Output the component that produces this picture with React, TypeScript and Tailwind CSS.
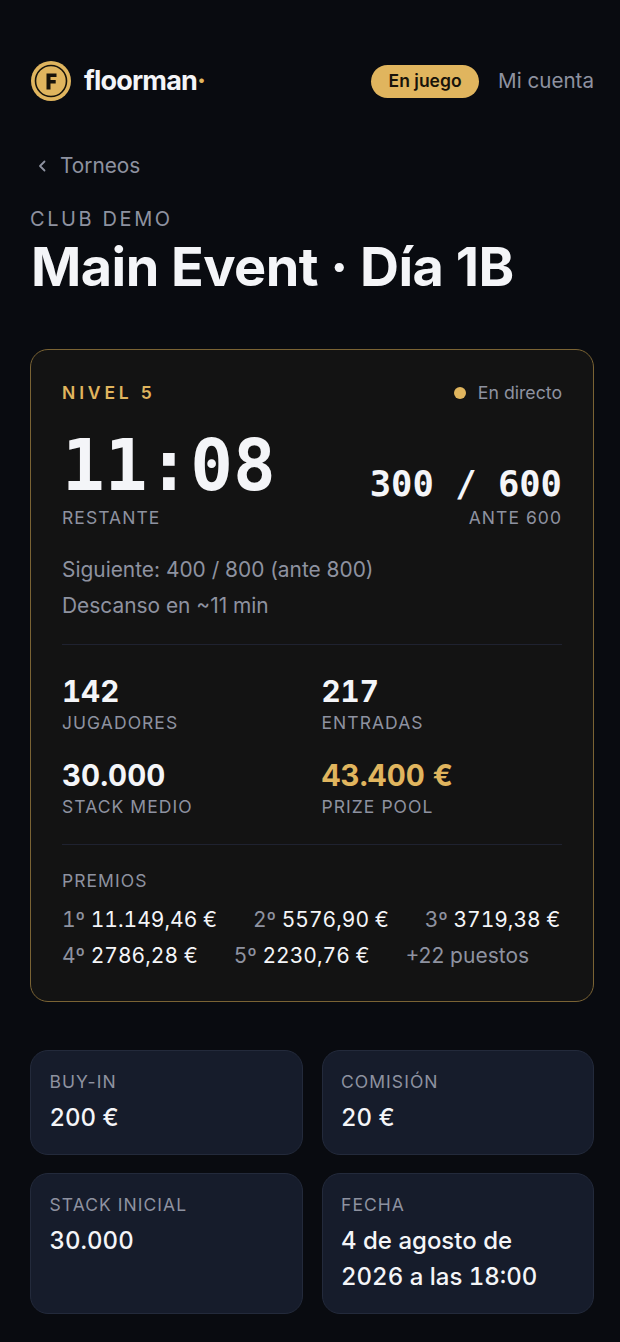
const sans = "font-['Inter','Noto_Sans',sans-serif]"

function Logo() {
  return (
    <svg width="40" height="40" viewBox="0 0 40 40" className="shrink-0">
      <circle cx="20" cy="20" r="20" fill="#e0b55e" />
      <circle cx="20" cy="20" r="15.5" fill="none" stroke="#17130a" strokeWidth="1.6" />
      <path d="M15.5 12.5h10v3.6h-6v3h5.2v3.5h-5.2v5.9h-4z" fill="#17130a" />
    </svg>
  )
}

function Stat({ value, label, gold }: { value: string; label: string; gold?: boolean }) {
  return (
    <div>
      <div className={`text-[29.5px] leading-[36px] font-bold tabular-nums ${gold ? 'text-[#e0b55e]' : 'text-[#f4f5f8]'}`}>{value}</div>
      <div className="mt-[2px] text-[17.5px] leading-[24px] tracking-[0.06em] text-[#8e92a0]">{label}</div>
    </div>
  )
}

function Prize({ pos, amount }: { pos: string; amount: string }) {
  return (
    <span className="text-[#8e92a0] tabular-nums">
      {pos} <span className="text-[#f4f5f8]">{amount}</span>
    </span>
  )
}

function InfoCard({ label, value }: { label: string; value: string }) {
  return (
    <div className="rounded-[18px] border border-[#232a3b] bg-[#161c2b] px-[18.5px] pt-[19px] pb-[18px]">
      <div className="text-[17.5px] leading-[24px] tracking-[0.06em] text-[#8e92a0]">{label}</div>
      <div className="mt-[6px] text-[24px] leading-[36px] font-medium tabular-nums text-[#f4f5f8]">{value}</div>
    </div>
  )
}

export default function App() {
  return (
    <div className={`${sans} min-h-screen bg-[#090b10] pl-[30px] pr-[26px] pt-[61px] pb-[29px]`}>
      <header className="flex items-center justify-between pl-px">
        <div className="flex items-center gap-[13px]">
          <Logo />
          <span className="text-[27px] leading-[40px] font-bold tracking-[-0.03em] text-[#f4f5f8]">
            floorman<span className="text-[#e0b55e]">·</span>
          </span>
        </div>
        <div className="flex items-center gap-[19px]">
          <span className="flex h-[33px] w-[108px] items-center justify-center rounded-full bg-[#e0b55e] text-[17.5px] font-semibold text-[#17130a]">
            En juego
          </span>
          <span className="text-[20.6px] text-[#8e92a0]">Mi cuenta</span>
        </div>
      </header>

      <div className="mt-[47px] flex items-center gap-[10px] pl-[4px] text-[20.8px] leading-[36px] text-[#8e92a0]">
        <svg width="16" height="16" viewBox="0 0 16 16" fill="none" stroke="currentColor" strokeWidth="1.8" strokeLinecap="round" strokeLinejoin="round">
          <path d="M10.5 3.5 6 8l4.5 4.5" />
        </svg>
        <span>Torneos</span>
      </div>

      <div className="mt-[23px] text-[20px] leading-[24px] tracking-[0.13em] text-[#8e92a0]">CLUB DEMO</div>
      <h1 className="mt-[7px] pl-px text-[54px] leading-[58px] font-bold tracking-[-0.01em] text-[#f4f5f8]">
        Main Event · Día 1B
      </h1>

      <section className="mt-[53px] rounded-[18px] border border-[#7a6334] bg-[#131313] px-[31px] pt-[31px] pb-[27px]">
        <div className="flex items-center justify-between">
          <span className="text-[17.5px] leading-[24px] font-semibold tracking-[0.22em] text-[#e0b55e]">NIVEL 5</span>
          <span className="flex items-center gap-[12px] text-[17.7px] leading-[24px] text-[#8e92a0]">
            <span className="size-[12px] rounded-full bg-[#e0b55e]" />
            En directo
          </span>
        </div>

        <div className="mt-[21px] flex items-end justify-between">
          <div>
            <div className="font-['DejaVu_Sans_Mono',monospace] text-[71px] leading-[80px] font-bold text-[#f4f5f8]">11:08</div>
            <div className="text-[17.5px] leading-[24px] tracking-[0.06em] text-[#8e92a0]">RESTANTE</div>
          </div>
          <div className="text-right">
            <div className="font-['DejaVu_Sans_Mono',monospace] text-[35.5px] leading-[44px] font-bold text-[#f4f5f8]">300 / 600</div>
            <div className="text-[17.5px] leading-[24px] tracking-[0.06em] text-[#8e92a0]">ANTE 600</div>
          </div>
        </div>

        <div className="mt-[22px] text-[20.9px] leading-[36px] text-[#8e92a0]">
          <div>Siguiente: 400 / 800 (ante 800)</div>
          <div>Descanso en ~11 min</div>
        </div>

        <div className="mt-[20px] grid grid-cols-2 gap-x-[19px] gap-y-[22px] border-t border-[#1f2230] pt-[28px]">
          <Stat value="142" label="JUGADORES" />
          <Stat value="217" label="ENTRADAS" />
          <Stat value="30.000" label="STACK MEDIO" />
          <Stat value="43.400 €" label="PRIZE POOL" gold />
        </div>

        <div className="mt-[25px] border-t border-[#1f2230] pt-[24px]">
          <div className="text-[17.5px] leading-[24px] tracking-[0.06em] text-[#8e92a0]">PREMIOS</div>
          <div className="mt-[9px] -mr-[6px] flex flex-wrap gap-x-[36px] text-[21px] leading-[36px]">
            <Prize pos="1º" amount="11.149,46 €" />
            <Prize pos="2º" amount="5576,90 €" />
            <Prize pos="3º" amount="3719,38 €" />
            <Prize pos="4º" amount="2786,28 €" />
            <Prize pos="5º" amount="2230,76 €" />
            <span className="text-[#8e92a0]">+22 puestos</span>
          </div>
        </div>
      </section>

      <section className="mt-[48px] grid grid-cols-2 gap-x-[19px] gap-y-[18px]">
        <InfoCard label="BUY-IN" value="200 €" />
        <InfoCard label="COMISIÓN" value="20 €" />
        <InfoCard label="STACK INICIAL" value="30.000" />
        <InfoCard label="FECHA" value="4 de agosto de 2026 a las 18:00" />
      </section>
    </div>
  )
}
